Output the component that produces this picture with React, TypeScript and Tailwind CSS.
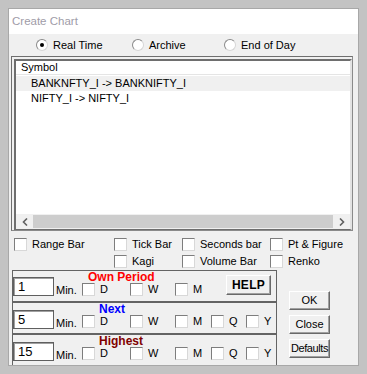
import React from "react";

const font = "font-['Liberation_Sans',Arial,sans-serif]";

function Check() {
	return (
		<div className="w-[13px] h-[13px] shrink-0 bg-white border border-[#7d7d7d] border-r-[#d8d8d8] border-b-[#d8d8d8]" />
	);
}

function CheckItem({ label, w }: { label: string; w?: string }) {
	return (
		<div className={`flex shrink-0 items-center gap-[5px] ${w ?? ""}`}>
			<Check />
			<span className="leading-[13px] whitespace-nowrap">{label}</span>
		</div>
	);
}

function Radio({ on, label, w }: { on?: boolean; label: string; w?: string }) {
	return (
		<div className={`flex shrink-0 items-center gap-[5px] ${w ?? ""}`}>
			<div className="w-[12px] h-[12px] rounded-full bg-white border border-[#8a8a8a] border-r-[#d6d6d6] border-b-[#d6d6d6] flex items-center justify-center">
				{on && <div className="w-[4px] h-[4px] rounded-full bg-black" />}
			</div>
			<span className="leading-[13px]">{label}</span>
		</div>
	);
}

function Btn({ children, className }: { children: React.ReactNode; className?: string }) {
	return (
		<div
			className={`flex shrink-0 items-center justify-center whitespace-nowrap bg-[#f0f0f0] border border-t-white border-l-white border-r-[#696969] border-b-[#696969] shadow-[inset_-1px_-1px_0_#a0a0a0] ${className ?? ""}`}
		>
			{children}
		</div>
	);
}

function Group({
	value,
	title,
	titleColor,
	titlePad,
	boxes,
	top,
	help,
}: {
	value: string;
	title: string;
	titleColor: string;
	titlePad: string;
	boxes: string[];
	top: string;
	help?: boolean;
}) {
	const widths = ["w-[48px]", "w-[45px]", "w-[36px]", "w-[35px]", ""];
	const first = value === "1";
	return (
		<div className={`flex items-start ${top}`}>
			<div
				className={`w-[41px] h-[19px] shrink-0 bg-white border border-[#5f5f5f] shadow-[inset_1px_1px_0_#a0a0a0] pl-[4px] flex items-center text-[13px] leading-[13px] ${first ? "mt-[6px]" : "mt-[7px]"}`}
			>
				{value}
			</div>
			<div className={`ml-[2px] w-[26px] shrink-0 leading-[13px] ${first ? "mt-[13px]" : "mt-[14px]"}`}>Min.</div>
			<div className="flex flex-col">
				<div className={`h-[12px] leading-[12px] text-[12px] font-bold ${titleColor} ${titlePad}`}>{title}</div>
				<div className="flex h-[13px] items-center">
					{boxes.map((b, i) => (
						<CheckItem key={b} label={b} w={widths[i]} />
					))}
				</div>
			</div>
			{help && (
				<Btn className="ml-auto mr-[5px] mt-[4px] w-[45px] h-[20px] text-[12px] font-bold tracking-[0.3px]">HELP</Btn>
			)}
		</div>
	);
}

export default function App() {
	return (
		<div className={`w-[367px] h-[374px] bg-[#c3c3c3] p-2 ${font} text-[11px] text-black`}>
			<div className="w-[351px] h-[358px] border border-[#a8a8a8] bg-[#f0f0f0] flex flex-col">
				<div className="h-[25px] shrink-0 bg-white flex items-center pl-[3px] text-[11.5px] text-[#a09ca8]">
					Create Chart
				</div>

				<div className="h-[22px] shrink-0 flex items-center pl-[27px]">
					<Radio on label="Real Time" w="w-[96px]" />
					<Radio label="Archive" w="w-[92px]" />
					<Radio label="End of Day" />
				</div>

				{/* symbol list */}
				<div className="ml-[2px] w-[342px] h-[175px] shrink-0 border border-[#6e6e6e] border-r-[#8a8a8a] border-b-[#8a8a8a] pt-[2px] pl-[2px] flex">
					<div className="flex-1 border-2 border-[#6e6e6e] border-r-[#e3e3e3] border-b-[1px] border-b-[#6e6e6e] bg-white flex flex-col">
						<div className="h-[14px] shrink-0 pl-[5px] leading-[13px] border-b border-[#e5e5e5]">Symbol</div>
						<div className="h-[1px]" />
						<div className="h-[15px] pl-[15px] leading-[15px] bg-[#f0f0f0]">BANKNFTY_I -&gt; BANKNIFTY_I</div>
						<div className="h-[15px] pl-[15px] leading-[15px]">NIFTY_I -&gt; NIFTY_I</div>
						<div className="flex-1" />
						<div className="h-[15px] shrink-0 bg-[#f0f0f0] flex items-stretch">
							<div className="w-[17px] flex items-center justify-center">
								<svg width="6" height="8" viewBox="0 0 6 8">
									<path d="M5 0.5 L1.5 4 L5 7.5" fill="none" stroke="#606060" strokeWidth="1.6" />
								</svg>
							</div>
							<div className="flex-1 my-px bg-[#cdcdcd]" />
							<div className="w-[17px] flex items-center justify-center">
								<svg width="6" height="8" viewBox="0 0 6 8">
									<path d="M1 0.5 L4.5 4 L1 7.5" fill="none" stroke="#606060" strokeWidth="1.6" />
								</svg>
							</div>
						</div>
					</div>
				</div>

				{/* chart types */}
				<div className="h-[39px] shrink-0 pt-[5px] pl-[5px]">
					<div className="flex h-[17px] items-center">
						<CheckItem label="Range Bar" w="w-[100px]" />
						<CheckItem label="Tick Bar" w="w-[68px]" />
						<CheckItem label="Seconds bar" w="w-[88px]" />
						<CheckItem label="Pt & Figure" />
					</div>
					<div className="flex h-[17px] items-center pl-[100px]">
						<CheckItem label="Kagi" w="w-[68px]" />
						<CheckItem label="Volume Bar" w="w-[88px]" />
						<CheckItem label="Renko" />
					</div>
				</div>

				{/* periods */}
				<div className="flex flex-1">
					<div className="ml-[3px] w-[265px] shrink-0 border-l border-r border-[#646464] flex flex-col">
						<Group
							value="1"
							title="Own Period"
							titleColor="text-[#ff0000]"
							titlePad="pl-[6px]"
							boxes={["D", "W", "M"]}
							top="h-[31px] border-t border-[#646464]"
							help
						/>
						<Group
							value="5"
							title="Next"
							titleColor="text-[#0000ff]"
							titlePad="pl-[17px]"
							boxes={["D", "W", "M", "Q", "Y"]}
							top="h-[32px] border-t-2 border-[#646464]"
						/>
						<Group
							value="15"
							title="Highest"
							titleColor="text-[#800000]"
							titlePad="pl-[17px]"
							boxes={["D", "W", "M", "Q", "Y"]}
							top="flex-1 border-t-2 border-[#646464]"
						/>
					</div>
					<div className="ml-[12px] pt-[21px] flex flex-col gap-[5px]">
						<Btn className="w-[41px] h-[19px]">OK</Btn>
						<Btn className="w-[41px] h-[19px]">Close</Btn>
						<Btn className="w-[41px] h-[19px] tracking-[-0.4px]">Defaults</Btn>
					</div>
				</div>
			</div>
		</div>
	);
}
